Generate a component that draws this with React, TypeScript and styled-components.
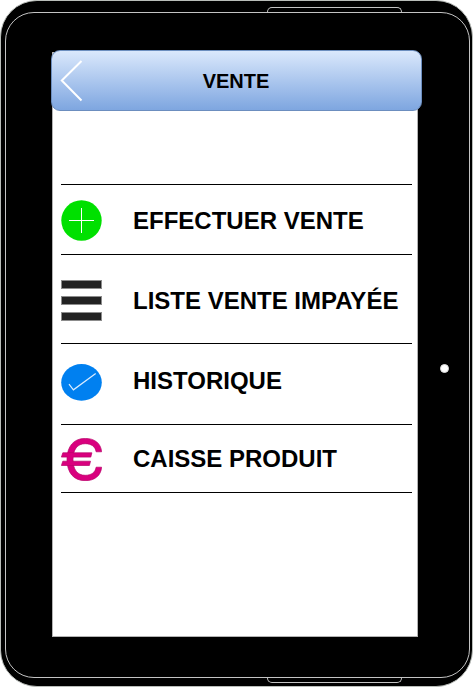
import React from "react";
import styled, { createGlobalStyle } from "styled-components";

const GlobalStyle = createGlobalStyle`
  *, *::before, *::after { box-sizing: border-box; }
  body { margin: 0; background: #fff; overflow: hidden; }
`;

const Tablet = styled.main`
  width: 473px;
  height: 687px;
  padding: 11px 2px 8px 4px;
  border: 1px solid #b9bdb9;
  border-radius: 37px;
  background: #000;
  font-family: "Liberation Sans", Arial, sans-serif;
  font-weight: bold;
  color: #000;
`;

const Bezel = styled.div`
  position: relative;
  display: flex;
  align-items: flex-start;
  width: 465px;
  height: 666px;
  padding: 39px 0 0 46px;
  border: 1px solid #c4c4c4;
  border-radius: 29px;
`;

const Slot = styled.span<{ $side: "top" | "bottom" }>`
  position: absolute;
  left: 261px;
  width: 135px;
  height: 6px;
  border: 1px solid #c4c4c4;
  ${({ $side }) =>
    $side === "top"
      ? "top: -6px; border-bottom: 0; border-radius: 5px 5px 0 0;"
      : "bottom: -6px; border-top: 0; border-radius: 0 0 5px 5px;"}
`;

const Screen = styled.section`
  flex: none;
  width: 366px;
  height: 585px;
  border: 1px solid #b3b3b3;
  background: #fff;
`;

const Header = styled.header`
  display: flex;
  align-items: center;
  width: 371px;
  height: 61px;
  margin: -3px 0 0 -2px;
  padding-left: 8px;
  border: 1px solid #6c8ebf;
  border-radius: 9px;
  background: linear-gradient(#dae8fc, #7ea6e0);
`;

const BackButton = styled.button`
  display: flex;
  flex: none;
  width: 24px;
  height: 43px;
  padding: 0;
  border: 0;
  background: none;
`;

const Title = styled.h1`
  flex: 1;
  margin: 0;
  padding-right: 33px;
  font-size: 20px;
  line-height: 24px;
  text-align: center;
`;

const Menu = styled.nav`
  width: 351px;
  margin: 73px 0 0 8px;
  border-bottom: 1px solid #000;
`;

const MenuRow = styled.a<{ $height: number }>`
  display: flex;
  align-items: flex-start;
  height: ${({ $height }) => $height}px;
  border-top: 1px solid #000;
`;

const IconCell = styled.span<{ $top: number }>`
  display: flex;
  flex: none;
  width: 72px;
  padding-top: ${({ $top }) => $top}px;
`;

const Label = styled.span<{ $top: number }>`
  padding-top: ${({ $top }) => $top}px;
  font-size: 24px;
  line-height: 28px;
  white-space: nowrap;
`;

const HomeButton = styled.span`
  flex: none;
  width: 9px;
  height: 9px;
  margin: 312px 0 0 22px;
  border: 1px solid #ddd;
  border-radius: 50%;
  background: #fff;
`;

const AddIcon = () => (
  <svg width="41" height="41" viewBox="0 0 41 41">
    <circle cx="20.5" cy="20.5" r="20.2" fill="#00e000" />
    <path d="M8 20.5H33M20.5 8V33" stroke="#fff" strokeWidth="1" />
  </svg>
);

const ListIcon = () => (
  <svg width="41" height="41" viewBox="0 0 41 41" fill="#222" stroke="#8c8c8c">
    <rect x=".5" y=".5" width="40" height="8" />
    <rect x=".5" y="16.5" width="40" height="8" />
    <rect x=".5" y="32.5" width="40" height="8" />
  </svg>
);

const CheckIcon = () => (
  <svg width="41" height="37" viewBox="0 0 41 37">
    <ellipse cx="20.5" cy="18.4" rx="20.3" ry="18.3" fill="#0080f0" />
    <path d="M8 20.2L12.4 25.8L34.7 9.4" fill="none" stroke="#d9ebff" strokeWidth="1.2" />
  </svg>
);

const EuroIcon = () => (
  <svg width="41" height="43" viewBox="0 0 41 43" fill="#d9007e" stroke="#b80069" strokeWidth=".7" strokeLinejoin="round">
    <path d="M40.6 13.8H35.1C34.3 8.5 30.2 5.7 24.2 5.7C16.3 5.7 12 11.5 12 21.5C12 31.5 16.3 37.3 24.2 37.3C30.2 37.3 34.3 34.5 35.1 29.2H40.6C40 37.5 33.8 42.7 24.2 42.7C12.5 42.7 6 34.5 6 21.5C6 8.5 12.5 .4 24.2 .4C33.8 .4 40 5.5 40.6 13.8Z" />
    <path d="M1.8 14.8H30.9L29.8 19.1H.4Z" />
    <path d="M1.8 23.2H29.5L28.4 27.5H.4Z" />
    <path d="M6.6 15.2H11.6V27.2H6.6Z" stroke="none" />
  </svg>
);

const items = [
  { label: "EFFECTUER VENTE", height: 70, iconTop: 15, textTop: 22, Icon: AddIcon },
  { label: "LISTE VENTE IMPAYÉE", height: 89, iconTop: 25, textTop: 32, Icon: ListIcon },
  { label: "HISTORIQUE", height: 81, iconTop: 20, textTop: 23, Icon: CheckIcon },
  { label: "CAISSE PRODUIT", height: 68, iconTop: 13, textTop: 20, Icon: EuroIcon },
];

export default function App() {
  return (
    <>
      <GlobalStyle />
      <Tablet>
        <Bezel>
          <Slot $side="top" />
          <Slot $side="bottom" />
          <Screen>
            <Header>
              <BackButton aria-label="Retour">
                <svg width="24" height="43" viewBox="0 0 24 43">
                  <path d="M21.5 2L1.8 21.5L21.5 41.5" fill="none" stroke="#fff" strokeWidth="2" />
                </svg>
              </BackButton>
              <Title>VENTE</Title>
            </Header>
            <Menu>
              {items.map(({ label, height, iconTop, textTop, Icon }) => (
                <MenuRow key={label} $height={height}>
                  <IconCell $top={iconTop}>
                    <Icon />
                  </IconCell>
                  <Label $top={textTop}>{label}</Label>
                </MenuRow>
              ))}
            </Menu>
          </Screen>
          <HomeButton />
        </Bezel>
      </Tablet>
    </>
  );
}
